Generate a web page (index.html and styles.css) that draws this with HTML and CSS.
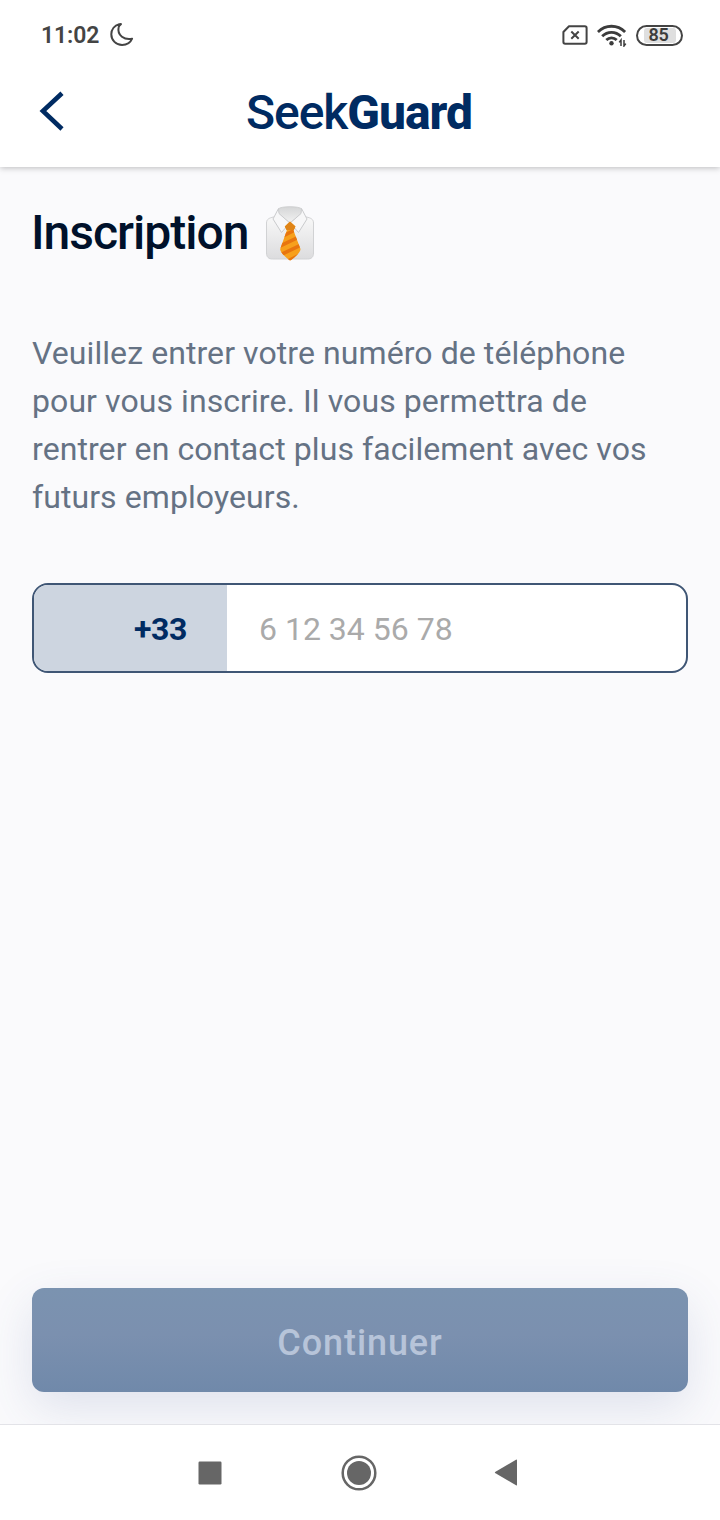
FILE: index.html
```
<!DOCTYPE html>
<html lang="fr">
<head>
<meta charset="utf-8">
<title>SeekGuard</title>
<link rel="stylesheet" href="styles.css">
</head>
<body>
<div class="screen">
  <div class="status">
    <div class="status-left">
      <span class="clock">11:02</span>
      <svg class="moon" width="24" height="24" viewBox="0 0 24 24"><path d="M9.200 1.200C4.600 2.500 1.300 6.500 1.300 11.300c0 6 4.800 10.700 10.800 10.700 4.500 0 8.400-2.500 10-6.300C14.600 17.300 7 12.500 8.600 4.400 8.800 3.200 9.300 2.200 11 1.100Z"/></svg>
    </div>
    <div class="status-right">
      <svg class="sim" width="26" height="20" viewBox="0 0 26 20"><path d="M7 1.200h15.800a1.800 1.800 0 0 1 1.800 1.800v14a1.800 1.800 0 0 1-1.800 1.800H3.200A1.800 1.800 0 0 1 1.400 17V7Z"/><path d="m9.300 6.500 7.400 7.200m0-7.200-7.400 7.200"/></svg>
      <svg class="wifi" width="30" height="24" viewBox="0 0 30 24"><path d="M.9 9C8.500 1.300 20.500 1.300 28.100 9M5.200 13.300c5.200-5.300 13.400-5.300 18.600 0M9.300 17.100c3-3 7.400-3 10.400 0"/><circle cx="14.500" cy="20.300" r="2.200"/><path class="arrows" d="M24 23v-6l-1.800 2.400M27 17v6l1.800-2.400"/></svg>
      <span class="battery"><span class="charge">85</span></span>
    </div>
  </div>
  <header class="appbar">
    <svg class="back" width="26" height="40" viewBox="0 0 26 40"><path d="M23 2.300 3.900 20 23 38" /></svg>
    <div class="brand"><span class="seek">Seek</span><span class="guard">Guard</span></div>
  </header>
  <main class="content">
    <div class="heading">
      <h1>Inscription</h1>
      <svg class="shirt" width="50" height="56" viewBox="0 0 50 56">
        <defs>
          <linearGradient id="cloth" x1="0" y1="0" x2="0" y2="1"><stop offset="0" stop-color="#f8f8f8"/><stop offset="1" stop-color="#dcdcde"/></linearGradient>
          <linearGradient id="neck" x1="0" y1="0" x2="0" y2="1"><stop offset="0" stop-color="#d5d6d7"/><stop offset="1" stop-color="#f2f2f2"/></linearGradient>
          <clipPath id="tie"><path d="m25 16.500 5.500 5-2 4 7 18.500c.3 3.500-6.300 8.700-9.700 11.300h-1.200c-3.400-2.600-9.700-7.800-9.400-11.300l6.600-18.500-2-4Z"/></clipPath>
        </defs>
        <path d="M8.500 12C4 13 1.500 14.300 1.500 18v30c0 4 2 6 6 6h35c4 0 6-2 6-6V18c0-3.700-2.500-5-7-6Z" fill="url(#cloth)" stroke="#d1d2d4"/>
        <path d="M13.500 4C15 1 35 1 36.500 4v5L25 18 13.500 9Z" fill="url(#neck)" stroke="#cfd0d1"/>
        <path d="M13.500 3.500 8 14l8.500 13.500L24.800 18 14 8.500ZM36.500 3.500 42 14l-8.500 13.500L25.200 18 36 8.500Z" fill="#f7f7f8" stroke="#cacbcd"/>
        <g clip-path="url(#tie)"><path fill="#f7a01c" d="M14 15h22v42H14z"/><path d="m14 33 20-10M13 42l23-11M13 51l23-11M19 58l18-9" stroke="#e8750f" stroke-width="3.600"/><path d="m18 20 7-4 6 5-2.200 4H21Z" fill="#df8417"/></g>
      </svg>
    </div>
    <p class="intro">Veuillez entrer votre numéro de téléphone<br>pour vous inscrire. Il vous permettra de<br>rentrer en contact plus facilement avec vos<br>futurs employeurs.</p>
    <div class="phone"><div class="prefix">+33</div><div class="number">6 12 34 56 78</div></div>
    <div class="action"><span class="label">Continuer</span></div>
  </main>
  <nav class="navbar">
    <svg width="24" height="24" viewBox="0 0 24 24"><rect x=".5" y=".5" width="23" height="23" rx="1.200"/></svg>
    <svg class="home" width="36" height="36" viewBox="0 0 36 36"><circle cx="18" cy="18" r="12"/><circle class="ring" cx="18" cy="18" r="16.300"/></svg>
    <svg width="24" height="27" viewBox="0 0 24 27"><path d="M23 1.200v24.600q0 1-1 .5L1.500 14.300q-1.300-.8 0-1.600L22 .7q1-.5 1 .5Z"/></svg>
  </nav>
</div>
</body>
</html>
```
FILE: styles.css
```
* { box-sizing: border-box; }
body { margin: 0; background: #fff; font-family: Roboto, sans-serif; }
.screen { width: 720px; height: 1520px; display: flex; flex-direction: column; overflow: hidden; }
svg { display: block; flex: none; fill: none; }
.status { height: 70px; background: #fff; display: flex; justify-content: space-between; padding: 0 37px 0 41px; align-items: center; flex: none; z-index: 2; }
.status-left, .status-right { display: flex; align-items: center; }
.clock { width: 59px; padding-top: 2px; font-size: 23px; font-weight: 600; color: #444; letter-spacing: -.1px; line-height: 28px; }
.moon { margin-left: 10px; stroke: #444; stroke-width: 2; stroke-linejoin: round; }
.sim { stroke: #444; stroke-width: 2; stroke-linejoin: round; }
.wifi { margin: 0 9px 0 9px; stroke: #3c3c3c; stroke-width: 2.800; }
.wifi circle { fill: #3c3c3c; stroke: none; }
.wifi .arrows { stroke-width: 1.500; }
.battery { width: 47px; height: 21px; border: 2px solid #444; border-radius: 11px; display: flex; justify-content: center; align-items: center; }
.charge { width: 32px; height: 15px; border-radius: 3px; background: #dfdfdf; color: #3c3c3c; font-size: 18px; line-height: 14px; font-weight: 600; padding-left: 5px; letter-spacing: -.4px; }
.appbar { height: 97px; background: #fff; display: flex; align-items: center; padding: 0 39px 14px; flex: none; box-shadow: 0 1px 6px rgba(0,0,0,.25); z-index: 1; }
.back { stroke: #002b62; stroke-width: 4.600; margin-top: -2px; }
.brand { flex: 1; padding: 3px 28px 0 0; text-align: center; font-size: 48px; line-height: 56px; color: #002b62; white-space: nowrap; }
.seek { font-weight: 500; letter-spacing: -1.100px; }
.guard { font-weight: 800; letter-spacing: -1px; }
.content { flex: 1; background: #fafafc; padding: 37px 32px 32px; display: flex; flex-direction: column; overflow: hidden; }
.heading { display: flex; align-items: center; height: 58px; }
h1 { margin: 0 0 0 -1px; width: 234px; font-size: 48px; line-height: 58px; font-weight: 500; letter-spacing: -1px; color: #00112b; white-space: nowrap; }
.intro { margin: 67px 0 0; font-size: 32px; line-height: 48px; color: #657284; letter-spacing: .08px; white-space: nowrap; }
.phone { margin-top: 62px; height: 90px; border: 2px solid #3f5675; border-radius: 16px; background: #fff; display: flex; overflow: hidden; flex: none; font-size: 32px; line-height: 88px; }
.prefix { width: 193px; background: #cdd5e0; color: #002b62; font-weight: 700; text-align: right; padding-right: 40px; letter-spacing: -.4px; }
.number { padding-left: 32px; color: #aaa; }
.action { margin-top: auto; height: 104px; border-radius: 12px; background: linear-gradient(#7b93b0, #7b90af 45%, #7089aa); display: flex; align-items: center; justify-content: center; box-shadow: 0 16px 48px rgba(70,85,150,.15); flex: none; padding-top: 5px; }
.label { font-size: 36px; font-weight: 500; letter-spacing: .9px; color: #b7c4d9; }
.navbar { height: 96px; background: #fff; border-top: 1px solid #e3e3e8; display: flex; justify-content: space-between; align-items: center; padding: 0 202px 0 198px; flex: none; }
.navbar svg { fill: #666; }
.home { margin-left: 2px; }
.navbar .ring { fill: none; stroke: #666; stroke-width: 2.500; }
```
